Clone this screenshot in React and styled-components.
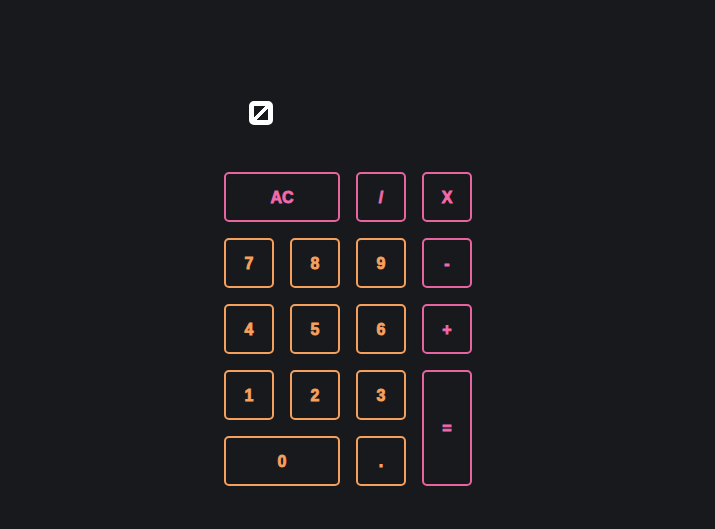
import React from 'react';
import styled, { createGlobalStyle } from 'styled-components';

const GlobalStyle = createGlobalStyle`
  html, body {
    margin: 0;
    padding: 0;
    background: #18191d;
  }
  body {
    font-family: 'Liberation Sans', Arial, sans-serif;
  }
`;

const Page = styled.div`
  width: 715px;
  height: 529px;
  background: #18191d;
  padding: 101px 0 0 224px;
  box-sizing: border-box;
`;

const Display = styled.div`
  height: 24px;
  padding-left: 25px;
  margin-bottom: 47px;
  display: flex;
  align-items: center;
`;

// the display renders its value as a heavy slashed square glyph
const Glyph = styled.span`
  display: inline-flex;
  align-items: center;
  justify-content: center;
  overflow: hidden;
  width: 24px;
  height: 24px;
  box-sizing: border-box;
  border: 5px solid #ffffff;
  border-radius: 5px;
  background: linear-gradient(
    to bottom right,
    transparent calc(50% - 2px),
    #ffffff calc(50% - 2px),
    #ffffff calc(50% + 2px),
    transparent calc(50% + 2px)
  );
  font-family: 'Liberation Sans', Arial, sans-serif;
  font-size: 10px;
  line-height: 1;
  color: transparent;
`;

const Keypad = styled.div`
  display: grid;
  grid-template-columns: repeat(4, 50px);
  grid-auto-rows: 50px;
  gap: 16px;
`;

const Key = styled.button`
  grid-column: span ${p => p.$cols || 1};
  grid-row: span ${p => p.$rows || 1};
  background: transparent;
  border: 2px solid ${p => (p.$op ? '#e6649f' : '#f5a05c')};
  border-radius: 5px;
  color: ${p => (p.$op ? '#f26aa9' : '#f7a15d')};
  font-family: 'Liberation Sans', Arial, sans-serif;
  font-weight: 700;
  font-size: 16px;
  -webkit-text-stroke: 0.8px currentColor;
  padding: 2px 0 0;
  display: flex;
  align-items: center;
  justify-content: center;
  box-sizing: border-box;
  cursor: pointer;
`;

const keys = [
  { label: 'AC', op: true, cols: 2 },
  { label: '/', op: true },
  { label: 'X', op: true },
  { label: '7' },
  { label: '8' },
  { label: '9' },
  { label: '-', op: true },
  { label: '4' },
  { label: '5' },
  { label: '6' },
  { label: '+', op: true },
  { label: '1' },
  { label: '2' },
  { label: '3' },
  { label: '=', op: true, rows: 2 },
  { label: '0', cols: 2 },
  { label: '.' },
];

const App = () => {
  return (
    <>
      <GlobalStyle />
      <Page>
        <Display>
          <Glyph>0</Glyph>
        </Display>
        <Keypad>
          {keys.map((k) => (
            <Key key={k.label} $op={k.op} $cols={k.cols} $rows={k.rows}>
              {k.label}
            </Key>
          ))}
        </Keypad>
      </Page>
    </>
  );
};

export default App;
